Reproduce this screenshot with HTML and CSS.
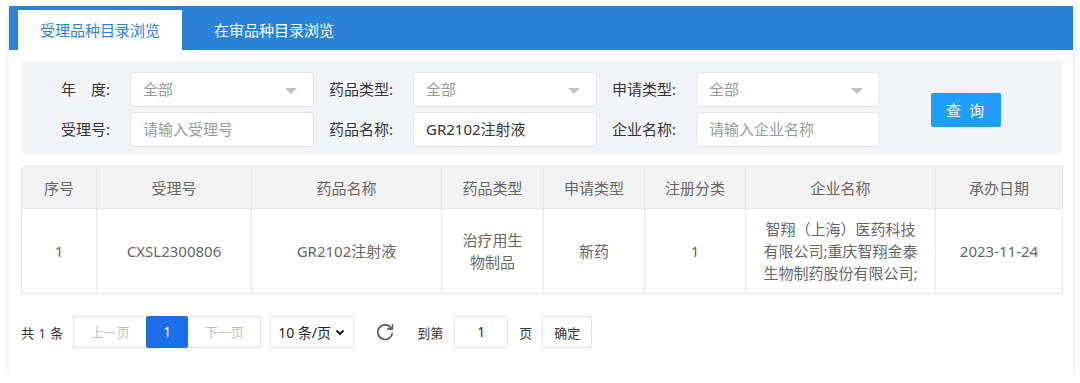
FILE: index.html
```html
<!DOCTYPE html>
<html>
<head>
<meta name="viewport" content="width=device-width, initial-scale=1">
<title>受理品种目录浏览</title>
<link rel="stylesheet" href="styles.css">
</head>
<body>
<div class="card">
  <div class="tabs">
    <div class="tab active">受理品种目录浏览</div>
    <div class="tab">在审品种目录浏览</div>
  </div>

  <div class="content">
    <div class="filter">
      <label class="lbl">年　度:</label>
      <div class="field sel"><span class="ph">全部</span><i class="caret"></i></div>
      <label class="lbl">药品类型:</label>
      <div class="field sel"><span class="ph">全部</span><i class="caret"></i></div>
      <label class="lbl">申请类型:</label>
      <div class="field sel"><span class="ph">全部</span><i class="caret"></i></div>
      <div class="btn-cell"><button class="query">查 询</button></div>

      <label class="lbl">受理号:</label>
      <div class="field"><span class="ph">请输入受理号</span></div>
      <label class="lbl">药品名称:</label>
      <div class="field"><span class="val">GR2102注射液</span></div>
      <label class="lbl">企业名称:</label>
      <div class="field"><span class="ph">请输入企业名称</span></div>
    </div>

    <table class="list">
      <colgroup>
        <col style="width:75px">
        <col style="width:155px">
        <col style="width:190px">
        <col style="width:102px">
        <col style="width:101px">
        <col style="width:101px">
        <col style="width:190px">
        <col style="width:127px">
      </colgroup>
      <thead>
        <tr>
          <th>序号</th>
          <th>受理号</th>
          <th>药品名称</th>
          <th>药品类型</th>
          <th>申请类型</th>
          <th>注册分类</th>
          <th>企业名称</th>
          <th>承办日期</th>
        </tr>
      </thead>
      <tbody>
        <tr>
          <td>1</td>
          <td>CXSL2300806</td>
          <td>GR2102注射液</td>
          <td>治疗用生物制品</td>
          <td>新药</td>
          <td>1</td>
          <td>智翔（上海）医药科技有限公司;重庆智翔金泰生物制药股份有限公司;</td>
          <td>2023-11-24</td>
        </tr>
      </tbody>
    </table>

    <div class="pager">
      <span class="count">共 1 条</span>
      <div class="pages">
        <a class="pg off wide">上一页</a>
        <a class="pg cur">1</a>
        <a class="pg off wide">下一页</a>
      </div>
      <div class="limit">10 条/页
        <svg width="10" height="7" viewBox="0 0 10 7"><path d="M1.5 1.5 L5 5 L8.5 1.5" fill="none" stroke="#222" stroke-width="2"/></svg>
      </div>
      <svg class="refresh" width="20" height="20" viewBox="0 0 20 20">
        <path d="M16.2 6.2 A7.3 7.3 0 1 0 17.3 11" fill="none" stroke="#555" stroke-width="1.6"/>
        <path d="M17.6 2.2 L17.2 7.4 L12.2 6.6" fill="none" stroke="#555" stroke-width="1.6"/>
      </svg>
      <span class="txt">到第</span>
      <div class="goto">1</div>
      <span class="txt">页</span>
      <button class="ok">确定</button>
    </div>
  </div>
</div>
</body>
</html>
```

FILE: styles.css
```css
* {
  box-sizing: border-box;
}

body {
  margin: 0;
  background: #fff;
  font-family: "Noto Sans", "Noto Sans CJK SC", sans-serif;
  color: #333;
}

.card {
  width: 1064px;
  height: 369px;
  margin: 6px 0 0 9px;
  background: #fff;
  box-shadow: 0 2px 6px rgba(90, 120, 160, 0.22);
}

/* tabs */
.tabs {
  height: 44px;
  background: #2b83d6;
  padding-left: 9px;
  display: flex;
  align-items: flex-end;
  gap: 10px;
}

.tab {
  height: 40px;
  line-height: 40px;
  padding: 0 22px;
  font-size: 15px;
  color: #fff;
}

.tab.active {
  background: #fff;
  color: #2b83d6;
}

.content {
  padding: 11px 11px 0 12px;
}

/* filter */
.filter {
  background: #f3f4f8;
  padding: 11px 0 7px 10px;
  display: grid;
  grid-template-columns: 99px 184px 99px 184px 99px 184px 1fr;
  grid-template-rows: 35px 35px;
  row-gap: 5px;
}

.lbl {
  font-size: 15px;
  color: #333;
  text-align: right;
  padding-right: 20px;
  line-height: 35px;
  white-space: nowrap;
}

.field {
  background: #fff;
  border: 1px solid #e6e6e6;
  border-radius: 3px;
  padding: 0 12px;
  font-size: 15px;
  line-height: 33px;
  position: relative;
}

.ph {
  color: #999;
}

.val {
  color: #333;
}

.caret {
  position: absolute;
  right: 16px;
  top: 15px;
  width: 0;
  height: 0;
  border-left: 6px solid transparent;
  border-right: 6px solid transparent;
  border-top: 6px solid #c2c2c2;
}

.btn-cell {
  grid-column: 7;
  grid-row: 1 / 3;
  display: flex;
  align-items: center;
  padding-left: 51px;
}

.query {
  width: 70px;
  height: 34px;
  border: none;
  border-radius: 2px;
  background: #1e9fff;
  color: #fff;
  font-family: inherit;
  font-size: 15px;
  letter-spacing: 2px;
  padding: 0;
}

/* table */
.list {
  margin-top: 12px;
  width: 1041px;
  border-collapse: collapse;
  table-layout: fixed;
  font-size: 15px;
  color: #666;
}

.list th,
.list td {
  border: 1px solid #e6e6e6;
  text-align: center;
  padding: 9px 15px;
  line-height: 22px;
}

.list th {
  background: #f2f2f2;
  font-weight: normal;
  height: 42px;
  padding-top: 0;
  padding-bottom: 0;
}

.list td {
  height: 85px;
}

/* pagination */
.pager {
  margin-top: 22px;
  display: flex;
  align-items: center;
  height: 32px;
  font-size: 13px;
}

.count {
  margin-right: 10px;
  color: #333;
  word-spacing: 1px;
}

.pages {
  display: flex;
  height: 32px;
}

.pg {
  display: block;
  height: 32px;
  line-height: 30px;
  text-align: center;
  border: 1px solid #e2e2e2;
  color: #333;
}

.pg.wide {
  width: 73px;
}

.pg.off {
  color: #c2c2c2;
}

.pg.cur {
  width: 42px;
  background: #1a6fe6;
  border-color: #1a6fe6;
  border-radius: 2px;
  color: #fff;
  font-size: 14px;
}

.pages .pg + .pg.off {
  border-left: none;
}

.pages .pg.off:first-child {
  border-right: none;
}

.limit {
  margin-left: 9px;
  width: 84px;
  height: 32px;
  border: 1px solid #e2e2e2;
  border-radius: 2px;
  display: flex;
  align-items: center;
  justify-content: space-between;
  padding: 0 8px 0 7px;
  font-size: 14px;
  color: #222;
}

.refresh {
  margin-left: 21px;
}

.txt {
  margin-left: 22px;
  color: #333;
}

.goto {
  margin-left: 11px;
  width: 54px;
  height: 32px;
  line-height: 30px;
  border: 1px solid #e2e2e2;
  border-radius: 2px;
  text-align: center;
  font-size: 14px;
}

.goto + .txt {
  margin-left: 11px;
}

.ok {
  margin-left: 10px;
  width: 50px;
  height: 32px;
  border: 1px solid #e2e2e2;
  border-radius: 2px;
  background: #fff;
  font-family: inherit;
  font-size: 13px;
  color: #333;
  padding: 0;
}
```
